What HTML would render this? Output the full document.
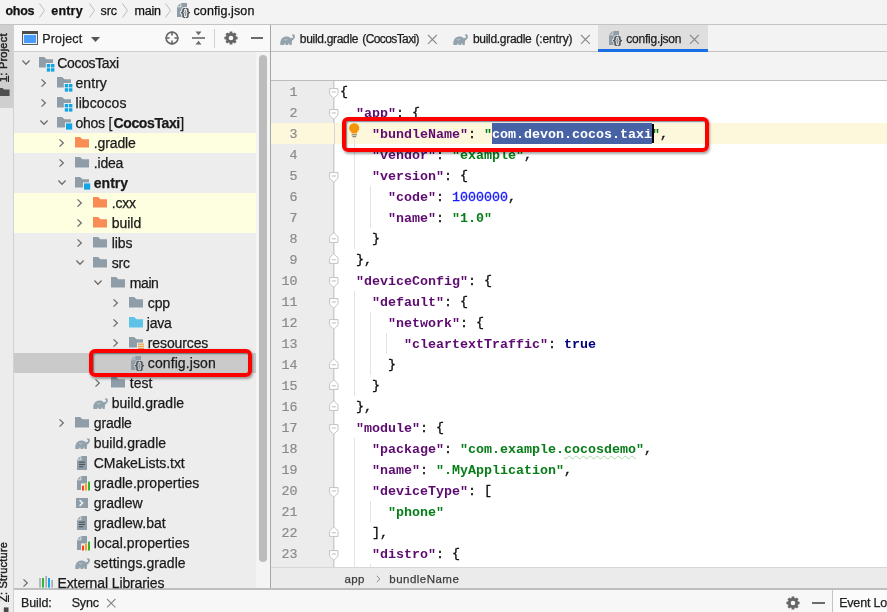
<!DOCTYPE html>
<html>
<head>
<meta charset="utf-8">
<title>config.json</title>
<style>
*{box-sizing:border-box;margin:0;padding:0}
html,body{width:887px;height:612px;overflow:hidden;background:#fff}
body{position:relative;font-family:"Liberation Sans",sans-serif;font-size:13px;color:#1a1a1a;-webkit-font-smoothing:antialiased}
.abs{position:absolute}
#root{position:absolute;left:0;top:0;width:887px;height:612px;overflow:hidden;will-change:transform}
svg{position:absolute;overflow:visible}
/* frame */
#nav{left:0;top:0;width:887px;height:24px;background:#f3f3f3}
#navline{left:0;top:24px;width:887px;height:1px;background:#c4c4c4}
#stripe{left:0;top:25px;width:14px;height:587px;background:#ececec}
#stripesel{left:0;top:25px;width:14px;height:83px;background:#cfcfcf}
#stripeline{left:13px;top:25px;width:1px;height:587px;background:#d2d2d2}
#phead{left:14px;top:25px;width:256px;height:26px;background:#f9f9f9}
#pheadline{left:14px;top:51px;width:256px;height:1px;background:#cdcdcd}
#tree{left:14px;top:52px;width:256px;height:537px;background:#ededed;overflow:hidden}
#sbtrack{left:256px;top:52px;width:14px;height:537px;background:#f4f4f4}
#sbthumb{left:259px;top:55px;width:8px;height:507px;background:#bcbcbc;border-radius:4px}
#divider{left:270px;top:25px;width:2px;height:564px;background:#d3d3d3;border-left:1px solid #a6a6a6}
#tabbar{left:271px;top:25px;width:616px;height:26px;background:#f3f3f3}
#tabline{left:271px;top:51px;width:616px;height:1px;background:#c2c2c2}
#strip2{left:271px;top:52px;width:616px;height:28px;background:#f3f3f3}
#edline{left:271px;top:80px;width:616px;height:1px;background:#bdbdbd}
#gutter{left:271px;top:81px;width:63px;height:486px;background:#ececec}
#foldline{left:333px;top:81px;width:2px;height:486px;background:#e6e6e6;border-left:1px solid #cdcdcd}
#editor{left:335px;top:81px;width:552px;height:486px;background:#fff}
#crumbline{left:271px;top:567px;width:616px;height:1px;background:#d6d6d6}
#crumb{left:271px;top:568px;width:616px;height:20px;background:#ebebeb}
#botline{left:14px;top:588px;width:873px;height:2px;background:#bebebe}
#bottom{left:14px;top:590px;width:873px;height:22px;background:#f7f7f7}
.t{position:absolute;white-space:nowrap;line-height:20px;height:20px;-webkit-text-stroke:0.25px}
.ln{position:absolute;left:0;width:26.5px;text-align:right;height:21px;line-height:21px;font-family:"Liberation Mono",monospace;font-size:13.333px;color:#8b8b8b;-webkit-text-stroke:0.2px}
.cl{position:absolute;left:69px;height:21px;line-height:21px;white-space:pre;font-family:"Liberation Mono",monospace;font-size:13.333px;font-weight:bold}
.cl .p{color:#111;font-weight:normal;-webkit-text-stroke:0.35px}
.cl .br{position:relative;top:-1.4px}
.cl .n{color:#1a1aff;font-weight:normal;-webkit-text-stroke:0.3px}
.cl .sel{background:#4862a6;color:#fff;display:inline-block;height:21px;margin-top:-1px;padding-top:1px;vertical-align:top}
.cl .sq{text-decoration:underline wavy #a9d6a9;text-decoration-thickness:1px;text-underline-offset:2px}
.rb{border:4px solid #fd0000;border-radius:6px;box-shadow:1px 1.5px 2.5px rgba(0,0,0,.35),inset 1px 1px 1.5px rgba(60,80,85,.75)}
</style>
</head>
<body>
<div id="root">
<div id="nav" class="abs"></div>
<div id="navline" class="abs"></div>
<div id="stripe" class="abs"></div>
<div id="stripesel" class="abs"></div>
<div id="stripeline" class="abs"></div>
<div id="phead" class="abs"></div>
<div id="pheadline" class="abs"></div>
<div id="tree" class="abs"></div>
<div id="sbtrack" class="abs"></div>
<div id="sbthumb" class="abs"></div>
<div id="divider" class="abs"></div>
<div id="tabbar" class="abs"></div>
<div id="tabline" class="abs"></div>
<div id="strip2" class="abs"></div>
<div id="edline" class="abs"></div>
<div id="gutter" class="abs"></div>
<div id="editor" class="abs"></div>
<div id="foldline" class="abs"></div>
<div id="crumbline" class="abs"></div>
<div id="crumb" class="abs"></div>
<div id="botline" class="abs"></div>
<div id="bottom" class="abs"></div>
<div class="t" style="left:5.5px;top:0.6px;line-height:20px;height:20px;font-size:12.5px;font-family:'Liberation Sans',sans-serif;color:#111;font-weight:bold;letter-spacing:-0.265px;">ohos</div>
<div class="t" style="left:51.3px;top:0.6px;line-height:20px;height:20px;font-size:12.5px;font-family:'Liberation Sans',sans-serif;color:#111;font-weight:bold;letter-spacing:0.184px;">entry</div>
<div class="t" style="left:100.6px;top:0.6px;line-height:20px;height:20px;font-size:12.5px;font-family:'Liberation Sans',sans-serif;color:#111;letter-spacing:-0.091px;">src</div>
<div class="t" style="left:134.4px;top:0.6px;line-height:20px;height:20px;font-size:12.5px;font-family:'Liberation Sans',sans-serif;color:#111;letter-spacing:-0.173px;">main</div>
<div class="t" style="left:193.5px;top:0.6px;line-height:20px;height:20px;font-size:12.5px;font-family:'Liberation Sans',sans-serif;color:#111;letter-spacing:0.112px;">config.json</div>
<svg style="left:38.5px;top:3px" width="6" height="15" viewBox="0 0 6 15"><path d="M0.5 0.5 L5.5 7.5 L0.5 14.5" stroke="#b8bec2" stroke-width="1" fill="none"/></svg>
<svg style="left:88.5px;top:3px" width="6" height="15" viewBox="0 0 6 15"><path d="M0.5 0.5 L5.5 7.5 L0.5 14.5" stroke="#b8bec2" stroke-width="1" fill="none"/></svg>
<svg style="left:122px;top:3px" width="6" height="15" viewBox="0 0 6 15"><path d="M0.5 0.5 L5.5 7.5 L0.5 14.5" stroke="#b8bec2" stroke-width="1" fill="none"/></svg>
<svg style="left:165px;top:3px" width="6" height="15" viewBox="0 0 6 15"><path d="M0.5 0.5 L5.5 7.5 L0.5 14.5" stroke="#b8bec2" stroke-width="1" fill="none"/></svg>
<svg style="left:177.2px;top:3.2px" width="15" height="16" viewBox="0 0 15 16"><path d="M4.3 0 H10 V14 H0 V4.3 H4.3 Z" fill="#8e9da7"/><path d="M0 3.5 L3.5 0 V3.5 Z" fill="#9aa8b1"/><text x="3.7" y="13" textLength="9.4" lengthAdjust="spacingAndGlyphs" font-family="Liberation Sans, sans-serif" font-size="10" font-weight="bold" fill="#4d5256" stroke="#f3f3f3" stroke-width="1.5" paint-order="stroke">{}</text></svg>
<svg style="left:22px;top:31px" width="16" height="14" viewBox="0 0 16 14"><rect x="0.5" y="0.5" width="15" height="13" fill="#4a9bff" stroke="#5a5a5a" stroke-width="1"/><rect x="0" y="0" width="16" height="3" fill="#4d4d4d"/><rect x="1.5" y="3.5" width="13" height="9" fill="none" stroke="#e9f1fb" stroke-width="1"/></svg>
<div class="t" style="left:42.3px;top:28.5px;line-height:20px;height:20px;font-size:12.5px;font-family:'Liberation Sans',sans-serif;color:#222;letter-spacing:0.156px;">Project</div>
<svg style="left:91px;top:36.8px" width="9" height="5" viewBox="0 0 9 5"><path d="M0 0 H9 L4.5 5 Z" fill="#555"/></svg>
<svg style="left:165px;top:31px" width="14" height="14" viewBox="0 0 14 14"><circle cx="7" cy="7" r="5.9" fill="none" stroke="#666" stroke-width="1.6"/><path d="M7 0.5 V4.6 M7 9.4 V13.5 M0.5 7 H4.6 M9.4 7 H13.5" stroke="#666" stroke-width="1.6"/></svg>
<svg style="left:192px;top:31px" width="13" height="14" viewBox="0 0 13 14"><path d="M0 7 H13" stroke="#666" stroke-width="1.6"/><path d="M3.5 0.5 H9.5 L6.5 4.3 Z M3.5 13.5 H9.5 L6.5 9.7 Z" fill="#6b6b6b"/></svg>
<div class="abs" style="left:214px;top:29px;width:1px;height:19px;background:#d0d0d0"></div>
<svg style="left:224px;top:31px" width="14" height="14" viewBox="0 0 14 14"><g transform="translate(7,7)"><circle r="3.7" fill="none" stroke="#666" stroke-width="2.8"/><path d="M-1.7 -4 L-1.3 -6.6 H1.3 L1.7 -4 Z" fill="#666" transform="rotate(0)"/><path d="M-1.7 -4 L-1.3 -6.6 H1.3 L1.7 -4 Z" fill="#666" transform="rotate(45)"/><path d="M-1.7 -4 L-1.3 -6.6 H1.3 L1.7 -4 Z" fill="#666" transform="rotate(90)"/><path d="M-1.7 -4 L-1.3 -6.6 H1.3 L1.7 -4 Z" fill="#666" transform="rotate(135)"/><path d="M-1.7 -4 L-1.3 -6.6 H1.3 L1.7 -4 Z" fill="#666" transform="rotate(180)"/><path d="M-1.7 -4 L-1.3 -6.6 H1.3 L1.7 -4 Z" fill="#666" transform="rotate(225)"/><path d="M-1.7 -4 L-1.3 -6.6 H1.3 L1.7 -4 Z" fill="#666" transform="rotate(270)"/><path d="M-1.7 -4 L-1.3 -6.6 H1.3 L1.7 -4 Z" fill="#666" transform="rotate(315)"/></g></svg>
<div class="abs" style="left:251px;top:37px;width:12px;height:2px;background:#6b6b6b"></div>
<svg style="left:21.6px;top:60px" width="8" height="5" viewBox="0 0 8 5"><path d="M0.4 0.5 L4 4.3 L7.6 0.5" stroke="#6e6e6e" stroke-width="1.3" fill="none"/></svg>
<svg style="left:39px;top:57.4px" width="16" height="16" viewBox="0 0 16 16"><path d="M0 0 H5 L7.6 2.3 H14 V10.6 H0 Z" fill="#8e9da7"/><rect x="6.8" y="6" width="9" height="9" fill="#ededed"/><rect x="7.8" y="7" width="3.4" height="3.4" fill="#12a5e6"/><rect x="7.8" y="11.2" width="3.4" height="3.4" fill="#12a5e6"/><rect x="12" y="7" width="3.4" height="3.4" fill="#12a5e6"/><rect x="12" y="11.2" width="3.4" height="3.4" fill="#12a5e6"/></svg>
<div class="t" style="left:57.3px;top:53px;line-height:20px;height:20px;font-size:14px;font-family:'Liberation Sans',sans-serif;color:#1a1a1a;letter-spacing:-0.355px;">CocosTaxi</div>
<svg style="left:40.5px;top:78.7px" width="5" height="8" viewBox="0 0 5 8"><path d="M0.5 0.4 L4.3 4 L0.5 7.6" stroke="#6e6e6e" stroke-width="1.3" fill="none"/></svg>
<svg style="left:57px;top:77.4px" width="16" height="16" viewBox="0 0 16 16"><path d="M0 0 H5 L7.6 2.3 H14 V10.6 H0 Z" fill="#8e9da7"/><rect x="6.8" y="6" width="9" height="9" fill="#ededed"/><rect x="7.8" y="7" width="3.4" height="3.4" fill="#12a5e6"/><rect x="7.8" y="11.2" width="3.4" height="3.4" fill="#12a5e6"/><rect x="12" y="7" width="3.4" height="3.4" fill="#12a5e6"/><rect x="12" y="11.2" width="3.4" height="3.4" fill="#12a5e6"/></svg>
<div class="t" style="left:75.5px;top:73px;line-height:20px;height:20px;font-size:14px;font-family:'Liberation Sans',sans-serif;color:#1a1a1a;letter-spacing:0.055px;">entry</div>
<svg style="left:40.5px;top:98.7px" width="5" height="8" viewBox="0 0 5 8"><path d="M0.5 0.4 L4.3 4 L0.5 7.6" stroke="#6e6e6e" stroke-width="1.3" fill="none"/></svg>
<svg style="left:57px;top:97.4px" width="16" height="16" viewBox="0 0 16 16"><path d="M0 0 H5 L7.6 2.3 H14 V10.6 H0 Z" fill="#8e9da7"/><rect x="6.8" y="6" width="9" height="9" fill="#ededed"/><rect x="7.8" y="7" width="3.4" height="3.4" fill="#12a5e6"/><rect x="7.8" y="11.2" width="3.4" height="3.4" fill="#12a5e6"/><rect x="12" y="7" width="3.4" height="3.4" fill="#12a5e6"/><rect x="12" y="11.2" width="3.4" height="3.4" fill="#12a5e6"/></svg>
<div class="t" style="left:75.5px;top:93px;line-height:20px;height:20px;font-size:14px;font-family:'Liberation Sans',sans-serif;color:#1a1a1a;letter-spacing:0.051px;">libcocos</div>
<svg style="left:39.6px;top:120px" width="8" height="5" viewBox="0 0 8 5"><path d="M0.4 0.5 L4 4.3 L7.6 0.5" stroke="#6e6e6e" stroke-width="1.3" fill="none"/></svg>
<svg style="left:57px;top:117.4px" width="16" height="16" viewBox="0 0 16 16"><path d="M0 0 H5 L7.6 2.3 H14 V10.6 H0 Z" fill="#8e9da7"/><rect x="8" y="5.4" width="8" height="8" fill="#ededed"/><rect x="9" y="6.4" width="6.2" height="6.2" fill="#12a5e6"/></svg>
<div class="t" style="left:75.5px;top:113px;line-height:20px;height:20px;font-size:14px;font-family:'Liberation Sans',sans-serif;color:#1a1a1a;letter-spacing:-0.273px;">ohos [</div>
<div class="t" style="left:113.6px;top:113px;line-height:20px;height:20px;font-size:14px;font-family:'Liberation Sans',sans-serif;color:#1a1a1a;font-weight:bold;letter-spacing:-0.396px;">CocosTaxi</div>
<div class="t" style="left:180.2px;top:113px;line-height:20px;height:20px;font-size:14px;font-family:'Liberation Sans',sans-serif;color:#1a1a1a;">]</div>
<div class="abs" style="left:14px;top:133px;width:242px;height:20px;background:#fefee0"></div>
<svg style="left:58.5px;top:138.7px" width="5" height="8" viewBox="0 0 5 8"><path d="M0.5 0.4 L4.3 4 L0.5 7.6" stroke="#6e6e6e" stroke-width="1.3" fill="none"/></svg>
<svg style="left:75px;top:137.4px" width="14" height="10.6" viewBox="0 0 14 10.6"><path d="M0 0 H5 L7.6 2.3 H14 V10.6 H0 Z" fill="#f98b55"/></svg>
<div class="t" style="left:93.8px;top:133px;line-height:20px;height:20px;font-size:14px;font-family:'Liberation Sans',sans-serif;color:#1a1a1a;letter-spacing:-0.130px;">.gradle</div>
<svg style="left:58.5px;top:158.7px" width="5" height="8" viewBox="0 0 5 8"><path d="M0.5 0.4 L4.3 4 L0.5 7.6" stroke="#6e6e6e" stroke-width="1.3" fill="none"/></svg>
<svg style="left:75px;top:157.4px" width="14" height="10.6" viewBox="0 0 14 10.6"><path d="M0 0 H5 L7.6 2.3 H14 V10.6 H0 Z" fill="#8e9da7"/></svg>
<div class="t" style="left:93.8px;top:153px;line-height:20px;height:20px;font-size:14px;font-family:'Liberation Sans',sans-serif;color:#1a1a1a;letter-spacing:-0.192px;">.idea</div>
<svg style="left:57.6px;top:180px" width="8" height="5" viewBox="0 0 8 5"><path d="M0.4 0.5 L4 4.3 L7.6 0.5" stroke="#6e6e6e" stroke-width="1.3" fill="none"/></svg>
<svg style="left:75px;top:177.4px" width="16" height="16" viewBox="0 0 16 16"><path d="M0 0 H5 L7.6 2.3 H14 V10.6 H0 Z" fill="#8e9da7"/><rect x="8" y="5.4" width="8" height="8" fill="#ededed"/><rect x="9" y="6.4" width="6.2" height="6.2" fill="#12a5e6"/></svg>
<div class="t" style="left:93.8px;top:173px;line-height:20px;height:20px;font-size:14px;font-family:'Liberation Sans',sans-serif;color:#1a1a1a;font-weight:bold;letter-spacing:0.013px;">entry</div>
<div class="abs" style="left:14px;top:193px;width:242px;height:20px;background:#fefee0"></div>
<svg style="left:76.5px;top:198.7px" width="5" height="8" viewBox="0 0 5 8"><path d="M0.5 0.4 L4.3 4 L0.5 7.6" stroke="#6e6e6e" stroke-width="1.3" fill="none"/></svg>
<svg style="left:93px;top:197.4px" width="14" height="10.6" viewBox="0 0 14 10.6"><path d="M0 0 H5 L7.6 2.3 H14 V10.6 H0 Z" fill="#f98b55"/></svg>
<div class="t" style="left:111.8px;top:193px;line-height:20px;height:20px;font-size:14px;font-family:'Liberation Sans',sans-serif;color:#1a1a1a;letter-spacing:-0.248px;">.cxx</div>
<div class="abs" style="left:14px;top:213px;width:242px;height:20px;background:#fefee0"></div>
<svg style="left:76.5px;top:218.7px" width="5" height="8" viewBox="0 0 5 8"><path d="M0.5 0.4 L4.3 4 L0.5 7.6" stroke="#6e6e6e" stroke-width="1.3" fill="none"/></svg>
<svg style="left:93px;top:217.4px" width="14" height="10.6" viewBox="0 0 14 10.6"><path d="M0 0 H5 L7.6 2.3 H14 V10.6 H0 Z" fill="#f98b55"/></svg>
<div class="t" style="left:111.8px;top:213px;line-height:20px;height:20px;font-size:14px;font-family:'Liberation Sans',sans-serif;color:#1a1a1a;letter-spacing:-0.039px;">build</div>
<svg style="left:76.5px;top:238.7px" width="5" height="8" viewBox="0 0 5 8"><path d="M0.5 0.4 L4.3 4 L0.5 7.6" stroke="#6e6e6e" stroke-width="1.3" fill="none"/></svg>
<svg style="left:93px;top:237.4px" width="14" height="10.6" viewBox="0 0 14 10.6"><path d="M0 0 H5 L7.6 2.3 H14 V10.6 H0 Z" fill="#8e9da7"/></svg>
<div class="t" style="left:111.8px;top:233px;line-height:20px;height:20px;font-size:14px;font-family:'Liberation Sans',sans-serif;color:#1a1a1a;letter-spacing:-0.104px;">libs</div>
<svg style="left:75.6px;top:260px" width="8" height="5" viewBox="0 0 8 5"><path d="M0.4 0.5 L4 4.3 L7.6 0.5" stroke="#6e6e6e" stroke-width="1.3" fill="none"/></svg>
<svg style="left:93px;top:257.4px" width="14" height="10.6" viewBox="0 0 14 10.6"><path d="M0 0 H5 L7.6 2.3 H14 V10.6 H0 Z" fill="#8e9da7"/></svg>
<div class="t" style="left:111.8px;top:253px;line-height:20px;height:20px;font-size:14px;font-family:'Liberation Sans',sans-serif;color:#1a1a1a;letter-spacing:-0.224px;">src</div>
<svg style="left:93.6px;top:280px" width="8" height="5" viewBox="0 0 8 5"><path d="M0.4 0.5 L4 4.3 L7.6 0.5" stroke="#6e6e6e" stroke-width="1.3" fill="none"/></svg>
<svg style="left:111px;top:277.4px" width="14" height="10.6" viewBox="0 0 14 10.6"><path d="M0 0 H5 L7.6 2.3 H14 V10.6 H0 Z" fill="#8e9da7"/></svg>
<div class="t" style="left:129.8px;top:273px;line-height:20px;height:20px;font-size:14px;font-family:'Liberation Sans',sans-serif;color:#1a1a1a;letter-spacing:-0.415px;">main</div>
<svg style="left:112.5px;top:298.7px" width="5" height="8" viewBox="0 0 5 8"><path d="M0.5 0.4 L4.3 4 L0.5 7.6" stroke="#6e6e6e" stroke-width="1.3" fill="none"/></svg>
<svg style="left:129px;top:297.4px" width="14" height="10.6" viewBox="0 0 14 10.6"><path d="M0 0 H5 L7.6 2.3 H14 V10.6 H0 Z" fill="#8e9da7"/></svg>
<div class="t" style="left:147.8px;top:293px;line-height:20px;height:20px;font-size:14px;font-family:'Liberation Sans',sans-serif;color:#1a1a1a;letter-spacing:-0.126px;">cpp</div>
<svg style="left:112.5px;top:318.7px" width="5" height="8" viewBox="0 0 5 8"><path d="M0.5 0.4 L4.3 4 L0.5 7.6" stroke="#6e6e6e" stroke-width="1.3" fill="none"/></svg>
<svg style="left:129px;top:317.4px" width="14" height="10.6" viewBox="0 0 14 10.6"><path d="M0 0 H5 L7.6 2.3 H14 V10.6 H0 Z" fill="#5fc3e8"/></svg>
<div class="t" style="left:146.8px;top:313px;line-height:20px;height:20px;font-size:14px;font-family:'Liberation Sans',sans-serif;color:#1a1a1a;letter-spacing:-0.222px;">java</div>
<svg style="left:112.5px;top:338.7px" width="5" height="8" viewBox="0 0 5 8"><path d="M0.5 0.4 L4.3 4 L0.5 7.6" stroke="#6e6e6e" stroke-width="1.3" fill="none"/></svg>
<svg style="left:129px;top:337.4px" width="16" height="14" viewBox="0 0 16 14"><path d="M0 0 H5 L7.6 2.3 H14 V10.6 H0 Z" fill="#8e9da7"/><rect x="8" y="5.6" width="8" height="7" fill="#ededed"/><rect x="9" y="6.6" width="6" height="1.1" fill="#e8962e"/><rect x="9" y="8.7" width="6" height="1.1" fill="#e8962e"/><rect x="9" y="10.8" width="6" height="1.1" fill="#e8962e"/></svg>
<div class="t" style="left:147.8px;top:333px;line-height:20px;height:20px;font-size:14px;font-family:'Liberation Sans',sans-serif;color:#1a1a1a;letter-spacing:-0.119px;">resources</div>
<div class="abs" style="left:14px;top:353px;width:242px;height:20px;background:#cacaca"></div>
<svg style="left:131px;top:356px" width="15" height="16" viewBox="0 0 15 16"><path d="M4.3 0 H10 V14 H0 V4.3 H4.3 Z" fill="#8e9da7"/><path d="M0 3.5 L3.5 0 V3.5 Z" fill="#9aa8b1"/><text x="3.7" y="13" textLength="9.4" lengthAdjust="spacingAndGlyphs" font-family="Liberation Sans, sans-serif" font-size="10" font-weight="bold" fill="#4d5256" stroke="#cacaca" stroke-width="1.5" paint-order="stroke">{}</text></svg>
<div class="t" style="left:147.8px;top:353px;line-height:20px;height:20px;font-size:14px;font-family:'Liberation Sans',sans-serif;color:#1a1a1a;letter-spacing:0.097px;">config.json</div>
<svg style="left:94.5px;top:378.7px" width="5" height="8" viewBox="0 0 5 8"><path d="M0.5 0.4 L4.3 4 L0.5 7.6" stroke="#6e6e6e" stroke-width="1.3" fill="none"/></svg>
<svg style="left:111px;top:377.4px" width="14" height="10.6" viewBox="0 0 14 10.6"><path d="M0 0 H5 L7.6 2.3 H14 V10.6 H0 Z" fill="#8e9da7"/></svg>
<div class="t" style="left:129.8px;top:373px;line-height:20px;height:20px;font-size:14px;font-family:'Liberation Sans',sans-serif;color:#1a1a1a;letter-spacing:-0.020px;">test</div>
<svg style="left:93px;top:397.7px" width="15" height="11" viewBox="0 0 15 11"><path d="M0.4 10.9 C-0.2 6 2 2.4 6.3 2.4 C8.4 2.4 9.8 2.9 10.8 4.3 C12.3 4.4 13.3 3.4 13.0 2.3 C12.8 1.5 12.1 1.5 11.8 1.7 C11.5 0.4 13.2 -0.4 14.4 0.8 C15.6 2.3 14.7 5.5 12.1 6.5 L11.7 10.9 L9.5 10.9 L9.0 8.9 L8.0 10.9 L5.6 10.9 L5.0 8.9 L4.0 10.9 Z" fill="#93a3ad"/><path d="M4.2 5.2 l1.4 1 l1.6 -1.1" stroke="#dfe4e7" stroke-width="0.6" fill="none"/></svg>
<div class="t" style="left:111.8px;top:393px;line-height:20px;height:20px;font-size:14px;font-family:'Liberation Sans',sans-serif;color:#1a1a1a;letter-spacing:-0.016px;">build.gradle</div>
<svg style="left:58.5px;top:418.7px" width="5" height="8" viewBox="0 0 5 8"><path d="M0.5 0.4 L4.3 4 L0.5 7.6" stroke="#6e6e6e" stroke-width="1.3" fill="none"/></svg>
<svg style="left:75px;top:417.4px" width="14" height="10.6" viewBox="0 0 14 10.6"><path d="M0 0 H5 L7.6 2.3 H14 V10.6 H0 Z" fill="#8e9da7"/></svg>
<div class="t" style="left:93.8px;top:413px;line-height:20px;height:20px;font-size:14px;font-family:'Liberation Sans',sans-serif;color:#1a1a1a;letter-spacing:-0.170px;">gradle</div>
<svg style="left:75px;top:437.7px" width="15" height="11" viewBox="0 0 15 11"><path d="M0.4 10.9 C-0.2 6 2 2.4 6.3 2.4 C8.4 2.4 9.8 2.9 10.8 4.3 C12.3 4.4 13.3 3.4 13.0 2.3 C12.8 1.5 12.1 1.5 11.8 1.7 C11.5 0.4 13.2 -0.4 14.4 0.8 C15.6 2.3 14.7 5.5 12.1 6.5 L11.7 10.9 L9.5 10.9 L9.0 8.9 L8.0 10.9 L5.6 10.9 L5.0 8.9 L4.0 10.9 Z" fill="#93a3ad"/><path d="M4.2 5.2 l1.4 1 l1.6 -1.1" stroke="#dfe4e7" stroke-width="0.6" fill="none"/></svg>
<div class="t" style="left:93.8px;top:433px;line-height:20px;height:20px;font-size:14px;font-family:'Liberation Sans',sans-serif;color:#1a1a1a;letter-spacing:-0.016px;">build.gradle</div>
<svg style="left:77px;top:456px" width="14" height="15" viewBox="0 0 14 15"><path d="M4.3 0 H10 V14 H0 V4.3 H4.3 Z" fill="#8e9da7"/><path d="M0 3.5 L3.5 0 V3.5 Z" fill="#9aa8b1"/><rect x="2" y="5.6" width="6" height="1.1" fill="#4f5558"/><rect x="2" y="7.9" width="6" height="1.1" fill="#4f5558"/><rect x="2" y="10.2" width="4.2" height="1.1" fill="#4f5558"/></svg>
<div class="t" style="left:93.8px;top:453px;line-height:20px;height:20px;font-size:14px;font-family:'Liberation Sans',sans-serif;color:#1a1a1a;letter-spacing:-0.065px;">CMakeLists.txt</div>
<svg style="left:77px;top:476px" width="14" height="15" viewBox="0 0 14 15"><path d="M4.3 0 H10 V14 H0 V4.3 H4.3 Z" fill="#8e9da7"/><path d="M0 3.5 L3.5 0 V3.5 Z" fill="#9aa8b1"/><rect x="4" y="7.4" width="10" height="7.6" fill="#ededed"/><rect x="5" y="9.6" width="2" height="4.9" fill="#f5421f"/><rect x="8" y="7.6" width="2" height="6.9" fill="#f9a11b"/><rect x="11" y="5.6" width="2" height="8.9" fill="#32b232"/></svg>
<div class="t" style="left:93.8px;top:473px;line-height:20px;height:20px;font-size:14px;font-family:'Liberation Sans',sans-serif;color:#1a1a1a;letter-spacing:0.032px;">gradle.properties</div>
<svg style="left:76px;top:498px" width="12" height="10" viewBox="0 0 12 10"><rect x="0" y="0" width="12" height="10" fill="#8e9da7"/><path d="M3.6 2.2 L6.6 5 L3.6 7.8" stroke="#eef0f2" stroke-width="1.6" fill="none"/></svg>
<div class="t" style="left:93.8px;top:493px;line-height:20px;height:20px;font-size:14px;font-family:'Liberation Sans',sans-serif;color:#1a1a1a;letter-spacing:-0.047px;">gradlew</div>
<svg style="left:77px;top:516px" width="14" height="15" viewBox="0 0 14 15"><path d="M4.3 0 H10 V14 H0 V4.3 H4.3 Z" fill="#8e9da7"/><path d="M0 3.5 L3.5 0 V3.5 Z" fill="#9aa8b1"/><rect x="2" y="5.6" width="6" height="1.1" fill="#4f5558"/><rect x="2" y="7.9" width="6" height="1.1" fill="#4f5558"/><rect x="2" y="10.2" width="4.2" height="1.1" fill="#4f5558"/></svg>
<div class="t" style="left:93.8px;top:513px;line-height:20px;height:20px;font-size:14px;font-family:'Liberation Sans',sans-serif;color:#1a1a1a;letter-spacing:0.026px;">gradlew.bat</div>
<svg style="left:77px;top:536px" width="14" height="15" viewBox="0 0 14 15"><path d="M4.3 0 H10 V14 H0 V4.3 H4.3 Z" fill="#8e9da7"/><path d="M0 3.5 L3.5 0 V3.5 Z" fill="#9aa8b1"/><rect x="4" y="7.4" width="10" height="7.6" fill="#ededed"/><rect x="5" y="9.6" width="2" height="4.9" fill="#f5421f"/><rect x="8" y="7.6" width="2" height="6.9" fill="#f9a11b"/><rect x="11" y="5.6" width="2" height="8.9" fill="#32b232"/></svg>
<div class="t" style="left:93.8px;top:533px;line-height:20px;height:20px;font-size:14px;font-family:'Liberation Sans',sans-serif;color:#1a1a1a;letter-spacing:0.054px;">local.properties</div>
<svg style="left:75px;top:557.7px" width="15" height="11" viewBox="0 0 15 11"><path d="M0.4 10.9 C-0.2 6 2 2.4 6.3 2.4 C8.4 2.4 9.8 2.9 10.8 4.3 C12.3 4.4 13.3 3.4 13.0 2.3 C12.8 1.5 12.1 1.5 11.8 1.7 C11.5 0.4 13.2 -0.4 14.4 0.8 C15.6 2.3 14.7 5.5 12.1 6.5 L11.7 10.9 L9.5 10.9 L9.0 8.9 L8.0 10.9 L5.6 10.9 L5.0 8.9 L4.0 10.9 Z" fill="#93a3ad"/><path d="M4.2 5.2 l1.4 1 l1.6 -1.1" stroke="#dfe4e7" stroke-width="0.6" fill="none"/></svg>
<div class="t" style="left:93.8px;top:553px;line-height:20px;height:20px;font-size:14px;font-family:'Liberation Sans',sans-serif;color:#1a1a1a;letter-spacing:0.056px;">settings.gradle</div>
<svg style="left:22.5px;top:578.7px" width="5" height="8" viewBox="0 0 5 8"><path d="M0.5 0.4 L4.3 4 L0.5 7.6" stroke="#6e6e6e" stroke-width="1.3" fill="none"/></svg>
<svg style="left:39px;top:573px" width="14" height="15" viewBox="0 0 14 15"><rect x="0.3" y="5" width="1.5" height="9.6" fill="#9aa7b0"/><rect x="3" y="5" width="2" height="9.6" fill="#2fb82f"/><rect x="6.4" y="3" width="1.5" height="11.6" fill="#9aa7b0"/><rect x="9" y="5" width="2" height="9.6" fill="#17a4e8"/><rect x="12.4" y="7" width="1.5" height="7.6" fill="#9aa7b0"/></svg>
<div class="t" style="left:57.5px;top:573px;line-height:20px;height:20px;font-size:14px;font-family:'Liberation Sans',sans-serif;color:#1a1a1a;letter-spacing:-0.113px;">External Libraries</div>
<div class="abs" style="left:598px;top:25px;width:110px;height:24px;background:#dedede"></div>
<div class="abs" style="left:598px;top:49px;width:110px;height:3px;background:#1a6ee6"></div>
<svg style="left:280px;top:33.5px" width="15" height="11" viewBox="0 0 15 11"><path d="M0.4 10.9 C-0.2 6 2 2.4 6.3 2.4 C8.4 2.4 9.8 2.9 10.8 4.3 C12.3 4.4 13.3 3.4 13.0 2.3 C12.8 1.5 12.1 1.5 11.8 1.7 C11.5 0.4 13.2 -0.4 14.4 0.8 C15.6 2.3 14.7 5.5 12.1 6.5 L11.7 10.9 L9.5 10.9 L9.0 8.9 L8.0 10.9 L5.6 10.9 L5.0 8.9 L4.0 10.9 Z" fill="#93a3ad"/><path d="M4.2 5.2 l1.4 1 l1.6 -1.1" stroke="#dfe4e7" stroke-width="0.6" fill="none"/></svg>
<div class="t" style="left:299.8px;top:28.5px;line-height:20px;height:20px;font-size:12px;font-family:'Liberation Sans',sans-serif;color:#1c1c1c;letter-spacing:-0.304px;">build.gradle</div>
<div class="t" style="left:362.3px;top:28.5px;line-height:20px;height:20px;font-size:12px;font-family:'Liberation Sans',sans-serif;color:#1c1c1c;letter-spacing:-0.605px;">(CocosTaxi)</div>
<svg style="left:428.4px;top:34.8px" width="8.8" height="8.8" viewBox="0 0 8.8 8.8"><path d="M0 0 L8.8 8.8 M8.8 0 L0 8.8" stroke="#8a8a8a" stroke-width="1.1" fill="none"/></svg>
<svg style="left:453px;top:33.5px" width="15" height="11" viewBox="0 0 15 11"><path d="M0.4 10.9 C-0.2 6 2 2.4 6.3 2.4 C8.4 2.4 9.8 2.9 10.8 4.3 C12.3 4.4 13.3 3.4 13.0 2.3 C12.8 1.5 12.1 1.5 11.8 1.7 C11.5 0.4 13.2 -0.4 14.4 0.8 C15.6 2.3 14.7 5.5 12.1 6.5 L11.7 10.9 L9.5 10.9 L9.0 8.9 L8.0 10.9 L5.6 10.9 L5.0 8.9 L4.0 10.9 Z" fill="#93a3ad"/><path d="M4.2 5.2 l1.4 1 l1.6 -1.1" stroke="#dfe4e7" stroke-width="0.6" fill="none"/></svg>
<div class="t" style="left:473px;top:28.5px;line-height:20px;height:20px;font-size:12px;font-family:'Liberation Sans',sans-serif;color:#1c1c1c;letter-spacing:-0.304px;">build.gradle</div>
<div class="t" style="left:535.5px;top:28.5px;line-height:20px;height:20px;font-size:12px;font-family:'Liberation Sans',sans-serif;color:#1c1c1c;letter-spacing:-0.139px;">(:entry)</div>
<svg style="left:581.2px;top:34.8px" width="8.8" height="8.8" viewBox="0 0 8.8 8.8"><path d="M0 0 L8.8 8.8 M8.8 0 L0 8.8" stroke="#8a8a8a" stroke-width="1.1" fill="none"/></svg>
<svg style="left:609px;top:31px" width="15" height="16" viewBox="0 0 15 16"><path d="M4.3 0 H10 V14 H0 V4.3 H4.3 Z" fill="#8e9da7"/><path d="M0 3.5 L3.5 0 V3.5 Z" fill="#9aa8b1"/><text x="3.7" y="13" textLength="9.4" lengthAdjust="spacingAndGlyphs" font-family="Liberation Sans, sans-serif" font-size="10" font-weight="bold" fill="#4d5256" stroke="#dedede" stroke-width="1.5" paint-order="stroke">{}</text></svg>
<div class="t" style="left:626.3px;top:28.5px;line-height:20px;height:20px;font-size:12px;font-family:'Liberation Sans',sans-serif;color:#1c1c1c;letter-spacing:-0.216px;">config.json</div>
<svg style="left:690.1px;top:34.8px" width="8.8" height="8.8" viewBox="0 0 8.8 8.8"><path d="M0 0 L8.8 8.8 M8.8 0 L0 8.8" stroke="#8a8a8a" stroke-width="1.1" fill="none"/></svg>
<div class="abs" style="left:271px;top:123px;width:616px;height:21px;background:#fdf8db"></div>
<div class="abs" style="left:334px;top:123px;width:1px;height:21px;background:#d4d4d4"></div>
<div class="abs" style="left:354px;top:138px;width:1px;height:111px;background:#e3e3e3"></div>
<div class="abs" style="left:354px;top:564px;width:1px;height:3px;background:#e3e3e3"></div><div class="abs" style="left:370px;top:564px;width:1px;height:3px;background:#e3e3e3"></div>
<div class="abs" style="left:354px;top:291px;width:1px;height:105px;background:#e3e3e3"></div>
<div class="abs" style="left:354px;top:438px;width:1px;height:126px;background:#e3e3e3"></div>
<div class="abs" style="left:370px;top:186px;width:1px;height:42px;background:#e3e3e3"></div>
<div class="abs" style="left:370px;top:312px;width:1px;height:63px;background:#e3e3e3"></div>
<div class="abs" style="left:370px;top:501px;width:1px;height:21px;background:#e3e3e3"></div>
<div class="abs" style="left:386px;top:333px;width:1px;height:21px;background:#e3e3e3"></div>
<div class="abs" style="left:271px;top:81px;width:616px;height:486px;overflow:hidden">
<div class="ln" style="top:1px">1</div>
<div class="cl" style="top:1px"><span class="p"><span class="br">{</span></span></div>
<div class="ln" style="top:22px">2</div>
<div class="cl" style="top:22px"><span class="p">  </span><span style="color:#5d0b70">"app"</span><span class="p">: <span class="br">{</span></span></div>
<div class="ln" style="top:43px">3</div>
<div class="cl" style="top:43px"><span class="p">    </span><span style="color:#5d0b70">"bundleName"</span><span class="p">: </span><span style="color:#067d17">"</span><span class="sel">com.devon.cocos.taxi</span><span style="color:#067d17">"</span><span class="p">,</span></div>
<div class="ln" style="top:64px">4</div>
<div class="cl" style="top:64px"><span class="p">    </span><span style="color:#5d0b70">"vendor"</span><span class="p">: </span><span style="color:#067d17">"example"</span><span class="p">,</span></div>
<div class="ln" style="top:85px">5</div>
<div class="cl" style="top:85px"><span class="p">    </span><span style="color:#5d0b70">"version"</span><span class="p">: <span class="br">{</span></span></div>
<div class="ln" style="top:106px">6</div>
<div class="cl" style="top:106px"><span class="p">      </span><span style="color:#5d0b70">"code"</span><span class="p">: </span><span class="n">1000000</span><span class="p">,</span></div>
<div class="ln" style="top:127px">7</div>
<div class="cl" style="top:127px"><span class="p">      </span><span style="color:#5d0b70">"name"</span><span class="p">: </span><span style="color:#067d17">"1.0"</span></div>
<div class="ln" style="top:148px">8</div>
<div class="cl" style="top:148px"><span class="p">    <span class="br">}</span></span></div>
<div class="ln" style="top:169px">9</div>
<div class="cl" style="top:169px"><span class="p">  <span class="br">}</span>,</span></div>
<div class="ln" style="top:190px">10</div>
<div class="cl" style="top:190px"><span class="p">  </span><span style="color:#5d0b70">"deviceConfig"</span><span class="p">: <span class="br">{</span></span></div>
<div class="ln" style="top:211px">11</div>
<div class="cl" style="top:211px"><span class="p">    </span><span style="color:#5d0b70">"default"</span><span class="p">: <span class="br">{</span></span></div>
<div class="ln" style="top:232px">12</div>
<div class="cl" style="top:232px"><span class="p">      </span><span style="color:#5d0b70">"network"</span><span class="p">: <span class="br">{</span></span></div>
<div class="ln" style="top:253px">13</div>
<div class="cl" style="top:253px"><span class="p">        </span><span style="color:#5d0b70">"cleartextTraffic"</span><span class="p">: </span><span style="color:#000080">true</span></div>
<div class="ln" style="top:274px">14</div>
<div class="cl" style="top:274px"><span class="p">      <span class="br">}</span></span></div>
<div class="ln" style="top:295px">15</div>
<div class="cl" style="top:295px"><span class="p">    <span class="br">}</span></span></div>
<div class="ln" style="top:316px">16</div>
<div class="cl" style="top:316px"><span class="p">  <span class="br">}</span>,</span></div>
<div class="ln" style="top:337px">17</div>
<div class="cl" style="top:337px"><span class="p">  </span><span style="color:#5d0b70">"module"</span><span class="p">: <span class="br">{</span></span></div>
<div class="ln" style="top:358px">18</div>
<div class="cl" style="top:358px"><span class="p">    </span><span style="color:#5d0b70">"package"</span><span class="p">: </span><span style="color:#067d17">"com.example.</span><span class="sq" style="color:#067d17">cocosdemo</span><span style="color:#067d17">"</span><span class="p">,</span></div>
<div class="ln" style="top:379px">19</div>
<div class="cl" style="top:379px"><span class="p">    </span><span style="color:#5d0b70">"name"</span><span class="p">: </span><span style="color:#067d17">".MyApplication"</span><span class="p">,</span></div>
<div class="ln" style="top:400px">20</div>
<div class="cl" style="top:400px"><span class="p">    </span><span style="color:#5d0b70">"deviceType"</span><span class="p">: <span class="br">[</span></span></div>
<div class="ln" style="top:421px">21</div>
<div class="cl" style="top:421px"><span class="p">      </span><span style="color:#067d17">"phone"</span></div>
<div class="ln" style="top:442px">22</div>
<div class="cl" style="top:442px"><span class="p">    <span class="br">]</span>,</span></div>
<div class="ln" style="top:463px">23</div>
<div class="cl" style="top:463px"><span class="p">    </span><span style="color:#5d0b70">"distro"</span><span class="p">: <span class="br">{</span></span></div>
</div>
<svg style="left:328.8px;top:87.7px" width="10" height="11" viewBox="0 0 10 11"><path d="M0.6 0.6 H9 V6.2 L4.8 10.3 L0.6 6.2 Z" fill="#fff" stroke="#c3c3c3" stroke-width="1"/><path d="M2.8 4 H6.8" stroke="#b9b9b9" stroke-width="1"/></svg>
<svg style="left:328.8px;top:108.7px" width="10" height="11" viewBox="0 0 10 11"><path d="M0.6 0.6 H9 V6.2 L4.8 10.3 L0.6 6.2 Z" fill="#fff" stroke="#c3c3c3" stroke-width="1"/><path d="M2.8 4 H6.8" stroke="#b9b9b9" stroke-width="1"/></svg>
<svg style="left:328.8px;top:171.7px" width="10" height="11" viewBox="0 0 10 11"><path d="M0.6 0.6 H9 V6.2 L4.8 10.3 L0.6 6.2 Z" fill="#fff" stroke="#c3c3c3" stroke-width="1"/><path d="M2.8 4 H6.8" stroke="#b9b9b9" stroke-width="1"/></svg>
<svg style="left:328.8px;top:276.7px" width="10" height="11" viewBox="0 0 10 11"><path d="M0.6 0.6 H9 V6.2 L4.8 10.3 L0.6 6.2 Z" fill="#fff" stroke="#c3c3c3" stroke-width="1"/><path d="M2.8 4 H6.8" stroke="#b9b9b9" stroke-width="1"/></svg>
<svg style="left:328.8px;top:297.7px" width="10" height="11" viewBox="0 0 10 11"><path d="M0.6 0.6 H9 V6.2 L4.8 10.3 L0.6 6.2 Z" fill="#fff" stroke="#c3c3c3" stroke-width="1"/><path d="M2.8 4 H6.8" stroke="#b9b9b9" stroke-width="1"/></svg>
<svg style="left:328.8px;top:318.7px" width="10" height="11" viewBox="0 0 10 11"><path d="M0.6 0.6 H9 V6.2 L4.8 10.3 L0.6 6.2 Z" fill="#fff" stroke="#c3c3c3" stroke-width="1"/><path d="M2.8 4 H6.8" stroke="#b9b9b9" stroke-width="1"/></svg>
<svg style="left:328.8px;top:423.7px" width="10" height="11" viewBox="0 0 10 11"><path d="M0.6 0.6 H9 V6.2 L4.8 10.3 L0.6 6.2 Z" fill="#fff" stroke="#c3c3c3" stroke-width="1"/><path d="M2.8 4 H6.8" stroke="#b9b9b9" stroke-width="1"/></svg>
<svg style="left:328.8px;top:486.7px" width="10" height="11" viewBox="0 0 10 11"><path d="M0.6 0.6 H9 V6.2 L4.8 10.3 L0.6 6.2 Z" fill="#fff" stroke="#c3c3c3" stroke-width="1"/><path d="M2.8 4 H6.8" stroke="#b9b9b9" stroke-width="1"/></svg>
<svg style="left:328.8px;top:549.7px" width="10" height="11" viewBox="0 0 10 11"><path d="M0.6 0.6 H9 V6.2 L4.8 10.3 L0.6 6.2 Z" fill="#fff" stroke="#c3c3c3" stroke-width="1"/><path d="M2.8 4 H6.8" stroke="#b9b9b9" stroke-width="1"/></svg>
<svg style="left:328.8px;top:232.3px" width="10" height="11" viewBox="0 0 10 11"><path d="M0.6 10.4 H9 V4.8 L4.8 0.7 L0.6 4.8 Z" fill="#fff" stroke="#c3c3c3" stroke-width="1"/><path d="M2.8 6.8 H6.8" stroke="#b9b9b9" stroke-width="1"/></svg>
<svg style="left:328.8px;top:253.3px" width="10" height="11" viewBox="0 0 10 11"><path d="M0.6 10.4 H9 V4.8 L4.8 0.7 L0.6 4.8 Z" fill="#fff" stroke="#c3c3c3" stroke-width="1"/><path d="M2.8 6.8 H6.8" stroke="#b9b9b9" stroke-width="1"/></svg>
<svg style="left:328.8px;top:358.3px" width="10" height="11" viewBox="0 0 10 11"><path d="M0.6 10.4 H9 V4.8 L4.8 0.7 L0.6 4.8 Z" fill="#fff" stroke="#c3c3c3" stroke-width="1"/><path d="M2.8 6.8 H6.8" stroke="#b9b9b9" stroke-width="1"/></svg>
<svg style="left:328.8px;top:379.3px" width="10" height="11" viewBox="0 0 10 11"><path d="M0.6 10.4 H9 V4.8 L4.8 0.7 L0.6 4.8 Z" fill="#fff" stroke="#c3c3c3" stroke-width="1"/><path d="M2.8 6.8 H6.8" stroke="#b9b9b9" stroke-width="1"/></svg>
<svg style="left:328.8px;top:400.3px" width="10" height="11" viewBox="0 0 10 11"><path d="M0.6 10.4 H9 V4.8 L4.8 0.7 L0.6 4.8 Z" fill="#fff" stroke="#c3c3c3" stroke-width="1"/><path d="M2.8 6.8 H6.8" stroke="#b9b9b9" stroke-width="1"/></svg>
<svg style="left:328.8px;top:526.3px" width="10" height="11" viewBox="0 0 10 11"><path d="M0.6 10.4 H9 V4.8 L4.8 0.7 L0.6 4.8 Z" fill="#fff" stroke="#c3c3c3" stroke-width="1"/><path d="M2.8 6.8 H6.8" stroke="#b9b9b9" stroke-width="1"/></svg>
<div class="abs" style="left:652px;top:124px;width:2px;height:19px;background:#000"></div>
<svg style="left:348.7px;top:122.8px" width="11" height="15" viewBox="0 0 11 15"><path d="M5.2 0.2 C2.2 0.2 0.1 2.4 0.1 5.1 C0.1 7.2 1.5 8.2 2.4 9.4 L2.8 10.4 H7.6 L8 9.4 C8.9 8.2 10.3 7.2 10.3 5.1 C10.3 2.4 8.2 0.2 5.2 0.2 Z" fill="#f5950c"/><rect x="2.6" y="11.3" width="5.4" height="1" fill="#6b6b6b"/><rect x="3.4" y="13.2" width="3.8" height="1" fill="#6b6b6b"/></svg>
<div class="t" style="left:344.4px;top:568.6px;line-height:20px;height:20px;font-size:11.5px;font-family:'Liberation Sans',sans-serif;color:#3d3d3d;letter-spacing:0.438px;">app</div>
<svg style="left:376px;top:575.2px" width="5" height="8" viewBox="0 0 5 8"><path d="M0.8 0.8 L3.8 4 L0.8 7.2" stroke="#8a8a8a" stroke-width="1" fill="none"/></svg>
<div class="t" style="left:389.3px;top:568.6px;line-height:20px;height:20px;font-size:11.5px;font-family:'Liberation Sans',sans-serif;color:#3d3d3d;letter-spacing:0.478px;">bundleName</div>
<div class="t" style="left:21px;top:593.3px;line-height:20px;height:20px;font-size:12.5px;font-family:'Liberation Sans',sans-serif;color:#222;letter-spacing:-0.097px;">Build:</div>
<div class="t" style="left:71.7px;top:593.3px;line-height:20px;height:20px;font-size:12.5px;font-family:'Liberation Sans',sans-serif;color:#222;letter-spacing:-0.199px;">Sync</div>
<svg style="left:107.4px;top:599.4px" width="8.4" height="8.4" viewBox="0 0 8.4 8.4"><path d="M0 0 L8.4 8.4 M8.4 0 L0 8.4" stroke="#8a8a8a" stroke-width="1.1" fill="none"/></svg>
<svg style="left:786px;top:596.3px" width="14" height="14" viewBox="0 0 14 14"><g transform="translate(7,7)"><circle r="3.7" fill="none" stroke="#666" stroke-width="2.8"/><path d="M-1.7 -4 L-1.3 -6.6 H1.3 L1.7 -4 Z" fill="#666" transform="rotate(0)"/><path d="M-1.7 -4 L-1.3 -6.6 H1.3 L1.7 -4 Z" fill="#666" transform="rotate(45)"/><path d="M-1.7 -4 L-1.3 -6.6 H1.3 L1.7 -4 Z" fill="#666" transform="rotate(90)"/><path d="M-1.7 -4 L-1.3 -6.6 H1.3 L1.7 -4 Z" fill="#666" transform="rotate(135)"/><path d="M-1.7 -4 L-1.3 -6.6 H1.3 L1.7 -4 Z" fill="#666" transform="rotate(180)"/><path d="M-1.7 -4 L-1.3 -6.6 H1.3 L1.7 -4 Z" fill="#666" transform="rotate(225)"/><path d="M-1.7 -4 L-1.3 -6.6 H1.3 L1.7 -4 Z" fill="#666" transform="rotate(270)"/><path d="M-1.7 -4 L-1.3 -6.6 H1.3 L1.7 -4 Z" fill="#666" transform="rotate(315)"/></g></svg>
<div class="abs" style="left:812px;top:602px;width:13px;height:2px;background:#6b6b6b"></div>
<div class="abs" style="left:832px;top:590px;width:1px;height:22px;background:#c4c4c4"></div>
<div class="abs" style="left:833px;top:590px;width:54px;height:22px;background:#fbfbfb"></div>
<div class="t" style="left:839.2px;top:593.3px;line-height:20px;height:20px;font-size:12.5px;font-family:'Liberation Sans',sans-serif;color:#222;letter-spacing:-0.200px;">Event Log</div>
<div class="abs" style="left:-4px;top:81.5px;transform-origin:0 0;transform:rotate(-90deg);white-space:nowrap;-webkit-text-stroke:0.45px;font-size:11px;line-height:14px;height:14px;color:#222;letter-spacing:0.22px"><u>1</u>: Project</div>
<div class="abs" style="left:-4px;top:601.6px;transform-origin:0 0;transform:rotate(-90deg);white-space:nowrap;-webkit-text-stroke:0.45px;font-size:11px;line-height:14px;height:14px;color:#222;letter-spacing:0.22px"><u>Z</u>: Structure</div>
<svg style="left:0px;top:88px" width="10" height="8" viewBox="0 0 10 8"><path d="M-3 0 H2.5 L4 1.6 H9.6 V8 H-3 Z" fill="#4f4f4f"/></svg>
<svg style="left:0px;top:607px" width="10" height="6" viewBox="0 0 10 6"><rect x="3.8" y="0.4" width="4.7" height="6" fill="#4a4a4a"/></svg>
<div class="abs rb" style="left:342px;top:117px;width:367px;height:35px"></div>
<div class="abs rb" style="left:89px;top:349px;width:163px;height:28px"></div>
</div>
</body>
</html>
